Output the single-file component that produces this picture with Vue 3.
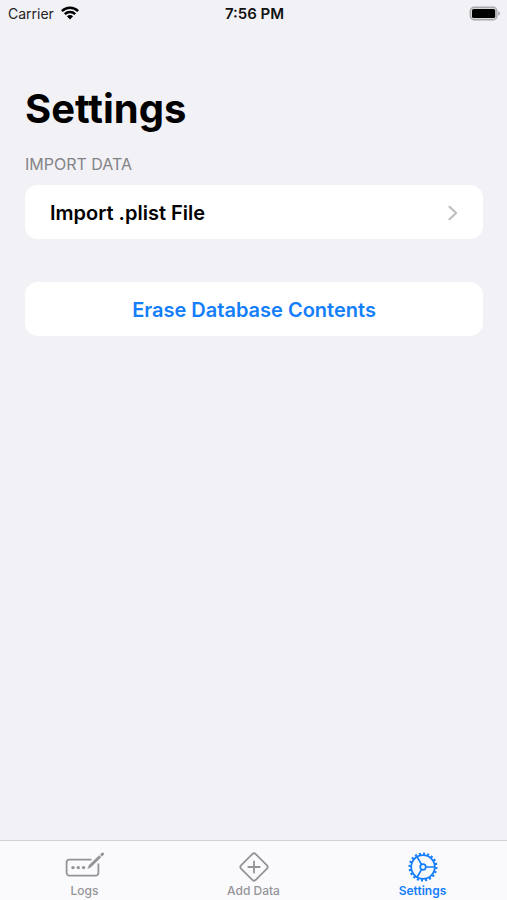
<script setup>
import { ref } from 'vue'

const active = ref('settings')
const tabs = [
  { id: 'logs', label: 'Logs' },
  { id: 'add', label: 'Add Data' },
  { id: 'settings', label: 'Settings' },
]
</script>

<template>
  <div class="screen">
    <header class="status">
      <div class="carrier">
        <span>Carrier</span>
        <svg width="18" height="14" viewBox="0 0 18 14" aria-hidden="true">
          <g fill="none" stroke="#000" stroke-width="2.4">
            <path d="M0.9 5.1A11.5 11.5 0 0 1 17.1 5.1" />
            <path d="M3.8 8.2A7.4 7.4 0 0 1 14.2 8.2" />
          </g>
          <path d="M5.9 10.3A4.4 4.4 0 0 1 12.1 10.3L9 13.4Z" />
        </svg>
      </div>
      <time class="time">7:56 PM</time>
      <div class="battery">
        <svg width="32" height="15" viewBox="0 0 32 15" aria-hidden="true">
          <rect x="1.3" y="1.3" width="26.6" height="12.4" rx="3.8" fill="#d8d8db" stroke="#a9a9ac" stroke-width="1.4" />
          <rect x="3" y="3" width="23.2" height="9" rx="1.6" fill="#000" />
          <path d="M29.2 5.2C30.4 5.7 31 6.5 31 7.5S30.4 9.3 29.2 9.8Z" fill="#a9a9ac" />
        </svg>
      </div>
    </header>

    <main class="content">
      <h1>Settings</h1>
      <section>
        <h2>IMPORT DATA</h2>
        <button type="button" class="row">
          <span>Import .plist File</span>
          <svg width="10" height="16" viewBox="0 0 10 16" aria-hidden="true">
            <path d="M1.5 1.8L8.1 8L1.5 14.2" fill="none" stroke="#bfbfc2" stroke-width="2.2" stroke-linecap="round" stroke-linejoin="round" />
          </svg>
        </button>
      </section>
      <button type="button" class="row erase">Erase Database Contents</button>
    </main>

    <nav class="tabs">
      <button
        v-for="tab in tabs"
        :key="tab.id"
        type="button"
        class="tab"
        :class="{ active: active === tab.id }"
        @click="active = tab.id"
      >
        <svg v-if="tab.id === 'logs'" width="40" height="32" viewBox="0 0 40 32" aria-hidden="true">
          <path d="M26.5 8.6H4.4A2.8 2.8 0 0 0 1.6 11.4V21.8A2.8 2.8 0 0 0 4.4 24.6H30.6A2.8 2.8 0 0 0 33.4 21.8V12.6" fill="none" stroke="currentColor" stroke-width="1.8" />
          <g fill="currentColor">
            <circle cx="8" cy="16.6" r="1.7" />
            <circle cx="13.3" cy="16.6" r="1.7" />
            <circle cx="18.6" cy="16.6" r="1.7" />
            <path d="M22.4 18L24 14.1L34.2 4.2L36.2 6.2L26 16.3Z" />
            <path d="M35 3.4L37 1.7Q38 1.2 38.7 1.9T38.8 3.7L37 5.5Z" />
          </g>
        </svg>
        <svg v-else-if="tab.id === 'add'" width="32" height="32" viewBox="0 0 32 32" aria-hidden="true">
          <g fill="none" stroke="currentColor" stroke-width="1.8" stroke-linecap="round">
            <rect x="5.6" y="5.6" width="20.8" height="20.8" rx="2.8" transform="rotate(45 16 16)" />
            <path d="M16 10.3V21.7M10.3 16H21.7" />
          </g>
        </svg>
        <svg v-else width="32" height="32" viewBox="0 0 32 32" aria-hidden="true">
          <g fill="none" stroke="currentColor">
            <circle cx="16" cy="16" r="11.8" stroke-width="1.8" />
            <circle cx="16" cy="16" r="13.4" stroke-width="2.2" pathLength="80" stroke-dasharray="2 2" />
            <circle cx="16" cy="16" r="2.8" stroke-width="1.7" />
            <path d="M18.8 16H27.5M14.6 13.6L10.2 6M14.6 18.4L10.2 26" stroke-width="1.7" />
          </g>
        </svg>
        <span>{{ tab.label }}</span>
      </button>
    </nav>
  </div>
</template>

<style>
body {
  background: #f2f1f6;
}
</style>

<style scoped>
.screen {
  display: flex;
  flex-direction: column;
  min-height: 100vh;
  background: #f2f1f6;
  color: #000;
  font-family: Inter, "Liberation Sans", sans-serif;
}

button {
  border: 0;
  margin: 0;
  font-family: inherit;
  cursor: pointer;
}

.status {
  display: grid;
  grid-template-columns: 1fr auto 1fr;
  align-items: center;
  height: 26px;
  padding: 0 6px 0 8px;
  font-size: 14px;
}

.carrier {
  display: flex;
  align-items: center;
  gap: 7px;
  color: #222;
}

.time {
  font-size: 15px;
  font-weight: 600;
  color: #111;
}

.battery {
  display: flex;
  justify-content: flex-end;
}

.content {
  flex: 1;
  padding: 58px 24px 24px 25px;
}

h1 {
  margin: 0 0 20px;
  font-size: 40px;
  line-height: 50px;
  font-weight: 700;
}

h2 {
  margin: 0 0 11px;
  font-size: 16px;
  line-height: 20px;
  font-weight: 400;
  color: #838387;
}

.row {
  display: flex;
  align-items: center;
  justify-content: space-between;
  width: 100%;
  height: 54px;
  padding: 2px 25px 0;
  border-radius: 13px;
  background: #fff;
  color: #000;
  font-size: 20px;
  font-weight: 600;
}

.erase {
  justify-content: center;
  margin-top: 43px;
  color: #147efb;
}

.tabs {
  display: grid;
  grid-template-columns: repeat(3, 1fr);
  height: 60px;
  box-sizing: border-box;
  border-top: 1px solid #d2d2d6;
  background: #fafafd;
}

.tab {
  display: flex;
  flex-direction: column;
  align-items: center;
  padding: 10px 0 0;
  background: none;
  color: #949497;
  font-size: 12px;
  line-height: 16px;
  font-weight: 500;
}

.tab.active {
  color: #147efb;
  font-weight: 600;
}
</style>
